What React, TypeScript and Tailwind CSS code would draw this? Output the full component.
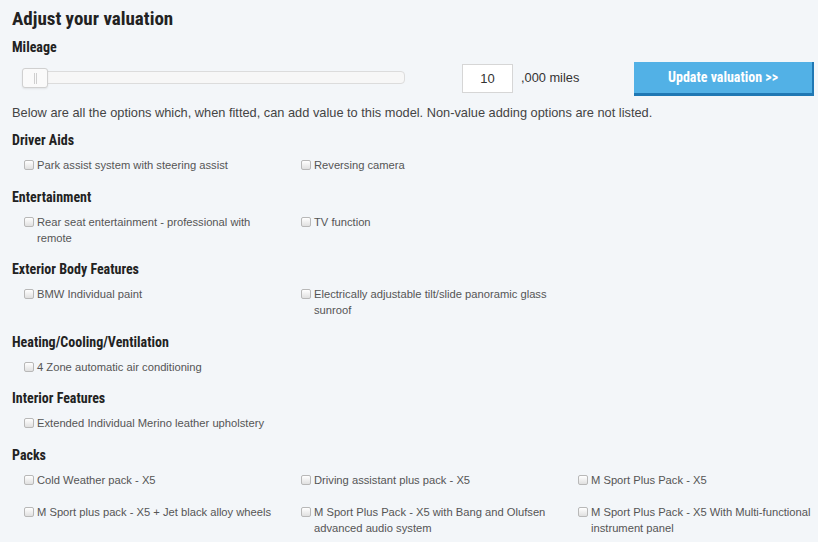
import { useState } from "react";

type Section = {
  title: string;
  options: string[];
};

const sections: Section[] = [
  {
    title: "Driver Aids",
    options: ["Park assist system with steering assist", "Reversing camera"],
  },
  {
    title: "Entertainment",
    options: ["Rear seat entertainment - professional with remote", "TV function"],
  },
  {
    title: "Exterior Body Features",
    options: ["BMW Individual paint", "Electrically adjustable tilt/slide panoramic glass sunroof"],
  },
  {
    title: "Heating/Cooling/Ventilation",
    options: ["4 Zone automatic air conditioning"],
  },
  {
    title: "Interior Features",
    options: ["Extended Individual Merino leather upholstery"],
  },
  {
    title: "Packs",
    options: [
      "Cold Weather pack - X5",
      "Driving assistant plus pack - X5",
      "M Sport Plus Pack - X5",
      "M Sport plus pack - X5 + Jet black alloy wheels",
      "M Sport Plus Pack - X5 with Bang and Olufsen advanced audio system",
      "M Sport Plus Pack - X5 With Multi-functional instrument panel",
    ],
  },
];

const condensed =
  "font-['Roboto_Condensed','Liberation_Sans_Narrow','DejaVu_Sans_Condensed',sans-serif] font-stretch-condensed font-bold";

function OptionBox({ label }: { label: string }) {
  const [checked, setChecked] = useState(false);
  return (
    <label className="flex pl-[12px] pr-[7px] cursor-pointer" onClick={() => setChecked(!checked)}>
      <span
        className={`mt-[3px] w-[10px] h-[10px] shrink-0 rounded-[2px] border border-[#b8b8b8] ${
          checked ? "bg-[#4fb0e5]" : "bg-gradient-to-b from-[#ffffff] to-[#e0e0e0]"
        }`}
      />
      <span className="ml-[3px] text-[11.2px] leading-[16px] text-[#555]">{label}</span>
    </label>
  );
}

export default function App() {
  const [miles, setMiles] = useState("10");

  return (
    <div className="w-full min-h-screen overflow-hidden bg-[#f3f6f9] pl-[12px] pt-[8px] font-['Liberation_Sans',Arial,sans-serif]">
      <h1 className={`${condensed} text-[19px] leading-[22px] text-[#222]`}>Adjust your valuation</h1>
      <h2 className={`${condensed} mt-[8px] text-[14px] leading-[18px] text-[#222]`}>Mileage</h2>

      {/* mileage slider + input + button */}
      <div className="mt-[6px] flex items-start h-[34px]">
        <div className="ml-[10px] mt-[9px] w-[383px] h-[13px] rounded-[4px] border border-[#dcdcdc] bg-[#f7f7f7] relative">
          <div className="absolute left-[-1px] top-[-4px] w-[26px] h-[20px] rounded-[3px] border border-[#d0d0d0] bg-[#fafafa] shadow-[0_1px_2px_rgba(0,0,0,0.08)] flex items-center justify-center gap-[1px]">
            <span className="w-[1px] h-[11px] bg-[#cfcfcf]" />
            <span className="w-[1px] h-[11px] bg-[#cfcfcf]" />
          </div>
        </div>
        <input
          className="ml-[57px] mt-[2px] w-[51px] h-[29px] border border-[#d6d6d6] bg-white text-center text-[13px] text-[#333] outline-none"
          value={miles}
          onChange={(e) => setMiles(e.target.value)}
        />
        <span className="ml-[8px] mt-[8px] w-[113px] text-[12.8px] leading-[15px] text-[#333]">,000 miles</span>
        <button
          className={`${condensed} w-[180px] h-[34px] bg-[#52b1e6] border-r-[2px] border-b-[3px] border-[#1f78b4] text-white text-[14px]`}
        >
          Update valuation &gt;&gt;
        </button>
      </div>

      <p className="mt-[8px] text-[12.8px] leading-[18px] text-[#444]">
        Below are all the options which, when fitted, can add value to this model. Non-value adding options are not listed.
      </p>

      <div className="mt-[8px] flex flex-col gap-[13.5px]">
        {sections.map((s) => (
          <div key={s.title}>
            <h3 className={`${condensed} text-[14px] leading-[20px] text-[#222] mb-[7px]`}>{s.title}</h3>
            <div className="grid grid-cols-[277px_277px_277px] gap-y-[16.5px] w-[831px]">
              {s.options.map((o) => (
                <OptionBox key={o} label={o} />
              ))}
            </div>
          </div>
        ))}
      </div>
    </div>
  );
}
